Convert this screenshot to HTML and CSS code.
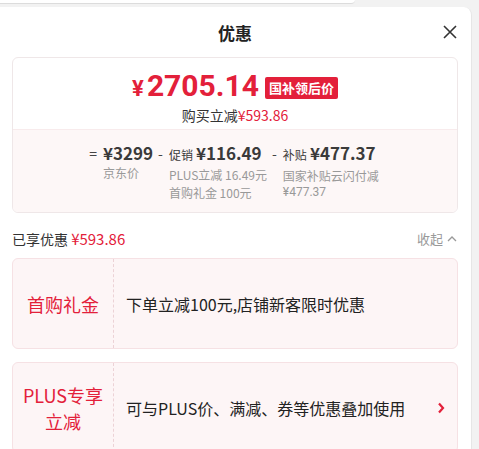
FILE: index.html
```html
<!DOCTYPE html>
<html lang="zh-CN">
<head>
  <meta charset="UTF-8">
  <title>优惠</title>
  <link rel="stylesheet" href="styles.css">
</head>
<body>

  <div class="topbar"></div>

  <div class="panel">
    <div class="header">
      <span></span>
      <h2>优惠</h2>
      <button class="close" aria-label="关闭">
        <svg width="14" height="14" viewBox="0 0 14 14">
          <path d="M1 1L13 13M13 1L1 13" stroke="#333" stroke-width="1.6" fill="none"/>
        </svg>
      </button>
    </div>

    <div class="price-card">
      <div class="price-top">
        <div class="final">
          <span class="final-price"><span class="yen">¥</span>2705.14</span>
          <span class="badge">国补领后价</span>
        </div>
        <div class="saved">购买立减<span class="red">¥593.86</span></div>
      </div>

      <div class="price-bottom">
        <div class="calc">
          <div class="calc-col">
            <span class="sign">=</span>
            <span class="amount">¥3299</span>
            <span class="note">京东价</span>
          </div>
          <div class="calc-col">
            <span class="sign">-</span>
            <span class="amount"><small>促销</small>¥116.49</span>
            <span class="note">PLUS立减 16.49元</span>
            <span class="note">首购礼金 100元</span>
          </div>
          <div class="calc-col">
            <span class="sign">-</span>
            <span class="amount"><small>补贴</small>¥477.37</span>
            <span class="note tight">国家补贴云闪付减</span>
            <span class="note num">¥477.37</span>
          </div>
        </div>
      </div>
    </div>

    <div class="summary">
      <div>已享优惠 <span class="red">¥593.86</span></div>
      <div class="fold">收起
        <svg width="10" height="7" viewBox="0 0 10 7">
          <path d="M1 6L5 2L9 6" stroke="#999" stroke-width="1.3" fill="none"/>
        </svg>
      </div>
    </div>

    <div class="coupon">
      <div class="coupon-name">首购礼金</div>
      <div class="coupon-desc">下单立减100元,店铺新客限时优惠</div>
    </div>

    <div class="coupon">
      <div class="coupon-name">PLUS专享<br>立减</div>
      <div class="coupon-desc">可与PLUS价、满减、券等优惠叠加使用</div>
      <svg class="arrow" width="8" height="12" viewBox="0 0 8 12">
        <path d="M2 1.5L6 6L2 10.5" stroke="#e3203a" stroke-width="2.2" fill="none"/>
      </svg>
    </div>
  </div>

</body>
</html>
```

FILE: styles.css
```css
* {
  box-sizing: border-box;
  margin: 0;
  padding: 0;
}

body {
  background: #f2f2f2;
  font-family: "Noto Sans CJK SC", "Noto Sans", sans-serif;
  color: #333;
  overflow: hidden;
}

.topbar {
  width: 355px;
  height: 4px;
  background: #fff;
  border-bottom: 1px solid #dcdcdc;
  border-bottom-right-radius: 10px;
}

.panel {
  margin-top: 3px;
  width: 472px;
  height: 460px;
  background: #fff;
  border-top-right-radius: 8px;
  border-right: 1px solid #e6e6e6;
  padding: 0 13px 0 12px;
}

.header {
  height: 50px;
  display: grid;
  grid-template-columns: 1fr auto 1fr;
  align-items: center;
}

.header h2 {
  font-size: 17px;
  font-weight: 700;
  color: #222;
}

.close {
  justify-self: end;
  margin-right: 1px;
  border: none;
  background: none;
  display: flex;
}

.red {
  color: #e3203a;
}

.price-card {
  border: 1px solid #efe7e8;
  border-radius: 6px;
  overflow: hidden;
}

.price-top {
  height: 71px;
  display: flex;
  flex-direction: column;
  align-items: center;
  padding-top: 12px;
}

.final {
  display: flex;
  align-items: center;
  gap: 6px;
  height: 34px;
}

.final-price {
  color: #e3203a;
  font-family: Roboto, "Liberation Sans", sans-serif;
  font-size: 30px;
  font-weight: 700;
  line-height: 34px;
}

.yen {
  font-size: 22px;
  margin-right: 3px;
}

.badge {
  background: #e3203a;
  color: #fff;
  font-size: 13px;
  font-weight: 700;
  line-height: 22px;
  padding: 0 4px;
  border-radius: 2px;
  margin-top: 1px;
}

.saved {
  font-size: 14px;
  line-height: 20px;
  margin-top: 1px;
}

.price-bottom {
  background: #fdf7f7;
  border-top: 1px solid #f8ebec;
  padding: 12px 0 10px;
  height: 83px;
}

.calc {
  display: flex;
  justify-content: center;
  gap: 5px;
  margin-left: -2px;
}

.calc-col {
  display: grid;
  grid-template-columns: auto auto;
  column-gap: 6px;
  align-content: start;
}

.sign {
  font-size: 14px;
  line-height: 22px;
  color: #444;
}

.amount {
  font-size: 17px;
  font-weight: 700;
  line-height: 22px;
  color: #3a3a3a;
}

.amount small {
  font-size: 12px;
  font-weight: 400;
  margin-right: 3px;
}

.note {
  grid-column: 2;
  font-size: 12px;
  line-height: 18px;
  color: #999;
}

.note:first-of-type {
  margin-top: 2px;
}

.note.tight {
  line-height: 14px;
  margin-top: 3px;
}

.note.num {
  font-family: Roboto, "Liberation Sans", sans-serif;
  line-height: 14px;
  margin-top: 2px;
}

.summary {
  display: flex;
  justify-content: space-between;
  align-items: center;
  height: 24px;
  margin: 13px 0 8px;
  font-size: 14px;
}

.summary .red {
  font-size: 15px;
}

.fold {
  display: flex;
  align-items: center;
  gap: 4px;
  color: #999;
  font-size: 13px;
  margin-right: 1px;
}

.coupon {
  display: flex;
  align-items: center;
  height: 91px;
  margin-bottom: 13px;
  background: #fdf5f6;
  border: 1px solid #f6e1e4;
  border-radius: 6px;
}

.coupon-name {
  width: 101px;
  align-self: stretch;
  display: flex;
  align-items: center;
  justify-content: center;
  text-align: center;
  border-right: 1px dashed #ecd2d6;
  color: #e3203a;
  font-size: 18px;
  line-height: 26px;
}

.coupon-desc {
  flex: 1;
  padding-left: 12px;
  font-size: 16px;
  color: #222;
}

.arrow {
  margin-right: 12px;
}
```
